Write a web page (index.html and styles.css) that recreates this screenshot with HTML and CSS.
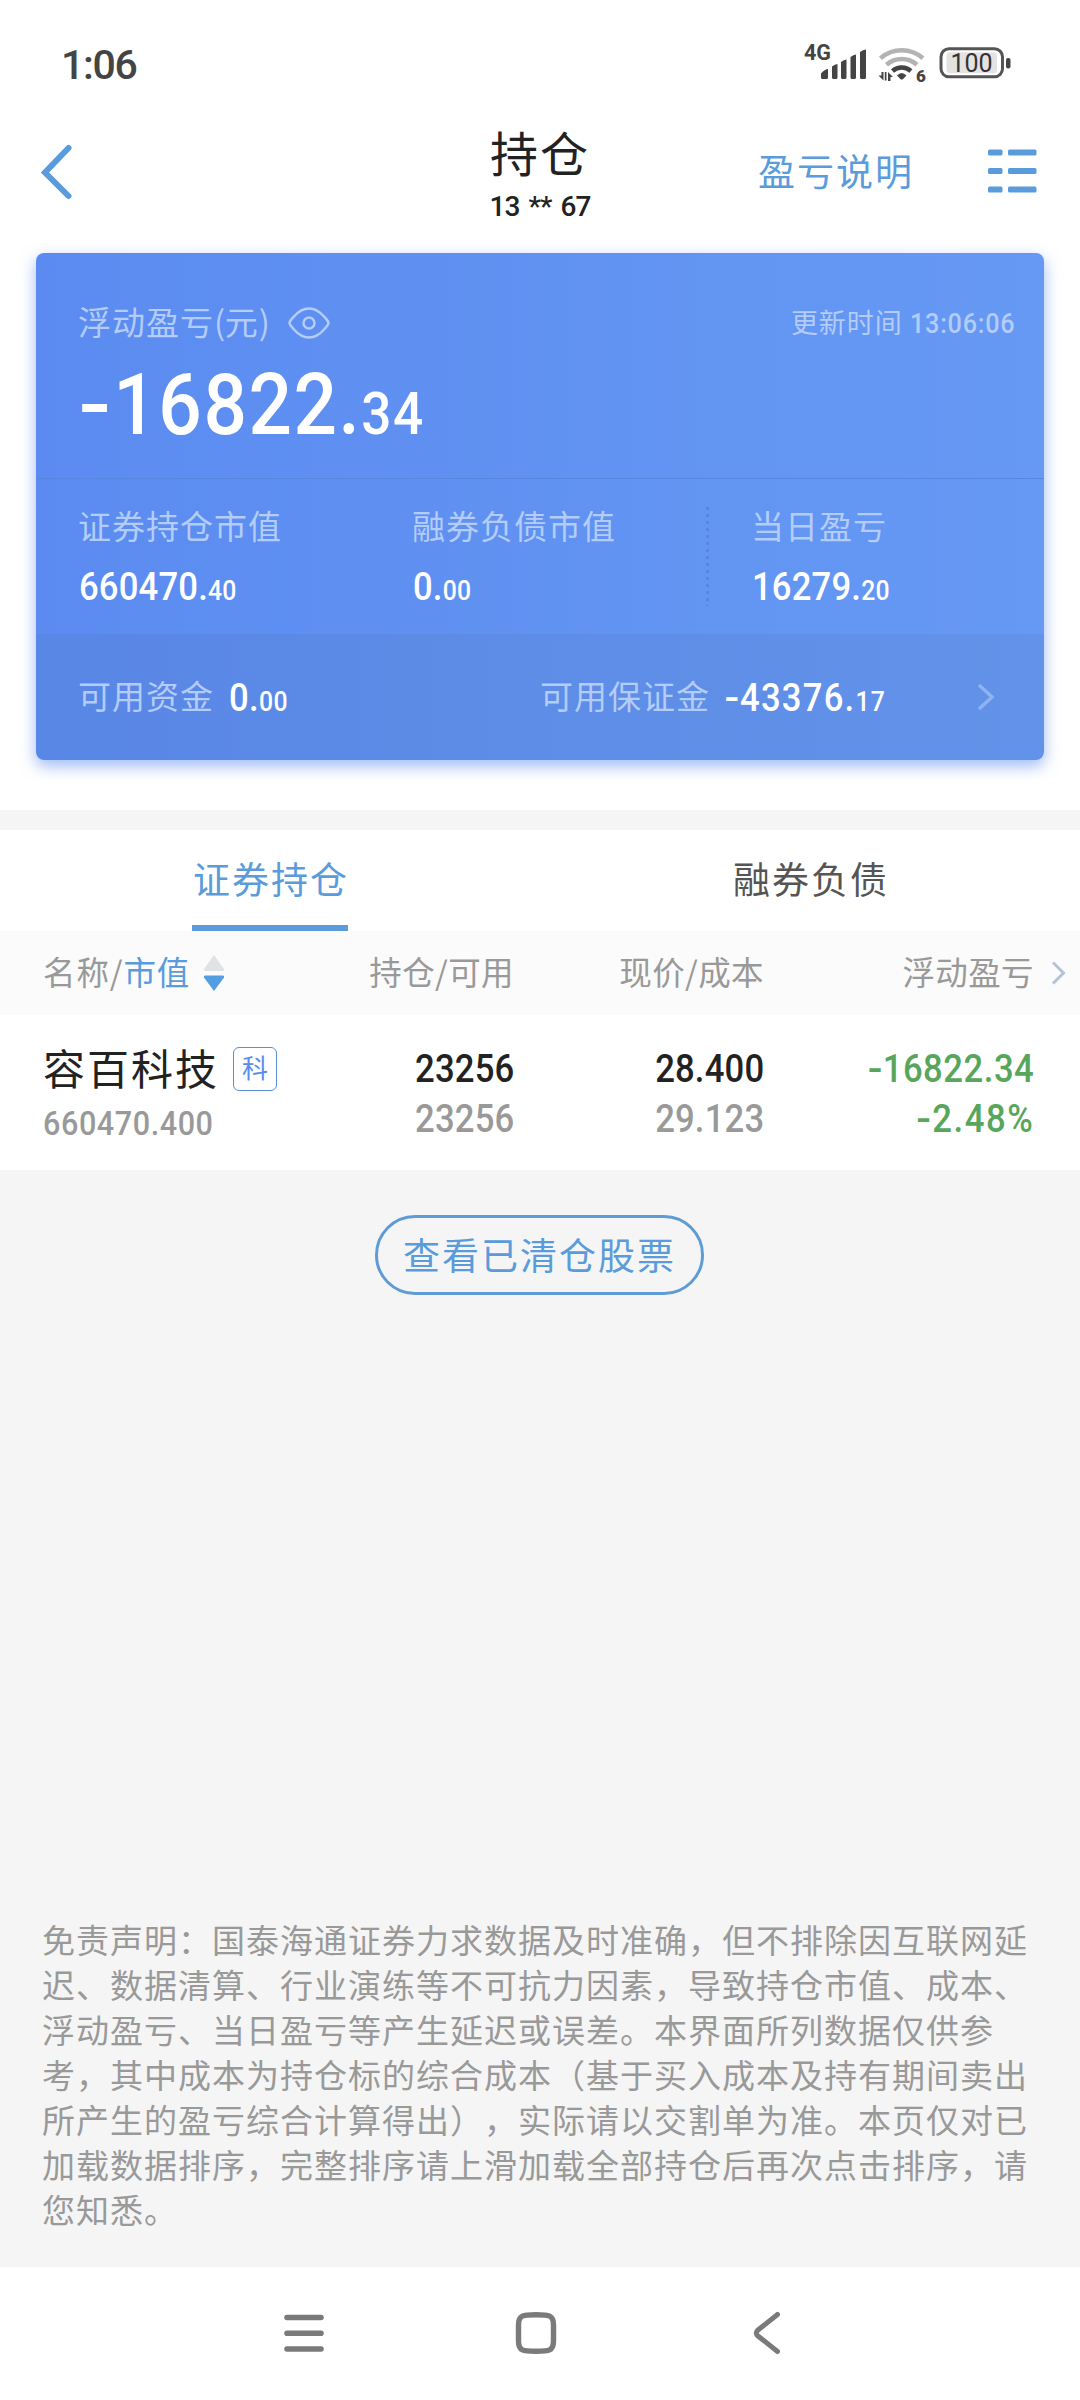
FILE: index.html
```html
<!DOCTYPE html>
<html lang="zh-CN">
<head>
<meta charset="utf-8">
<title>持仓</title>
<link rel="stylesheet" href="styles.css">
</head>
<body>
<div class="screen">
  <div class="status">
    <span class="clock">1:06</span>
    <svg class="status-icons" width="210" height="40" viewBox="0 0 210 40">
      <g fill="#444">
        <text x="0" y="18.500" class="net">4G</text>
        <path d="M17 36.500v-4q4-4.500 7-4.500v8.500q0 1.500-1.500 1.500h-4q-1.500 0-1.500-1.500zM28 36.500v-11q3-2.500 5.500-2.500v13.500q0 1.500-1.500 1.500h-2.500q-1.500 0-1.500-1.500zM37 36.500V21q3-2.500 5.500-2.500v18q0 1.500-1.500 1.500h-2.500q-1.500 0-1.500-1.500zM46.500 36.500V16q3-2.500 5.500-2.500v23q0 1.500-1.500 1.500H48q-1.500 0-1.500-1.500zM56 36.500V11q3-2.500 6-2.500v28q0 1.500-1.500 1.500h-3q-1.500 0-1.500-1.500z"/>
        <path d="M93 34.500q4.700-5 9.400 0l-3.300 3.500q-1.400 1.200-2.800 0z"/>
        <path d="M79.500 31v8.500l-5-5h3V31zM80.800 31h1.700v8.500h-1.700zM84 40v-9l5 5h-2.500v4z"/>
        <text x="112" y="40.500" class="six">6</text>
      </g>
      <g fill="none" stroke-linecap="butt" stroke-width="4.600">
        <path stroke="#b3b3b3" d="M76.500 17.300a32 32 0 0 1 42.400 0M82.500 23.800a23 23 0 0 1 30.400 0"/>
        <path stroke="#444" d="M88.500 30a14 14 0 0 1 18.400 0"/>
      </g>
      <rect x="137" y="7.800" width="61.500" height="28" rx="8" fill="none" stroke="#555" stroke-width="3"/>
      <rect x="142.500" y="11.300" width="50.500" height="21" rx="4" fill="#e3e3e3"/>
      <rect x="202" y="17" width="4.500" height="10.500" rx="2" fill="#444"/>
      <text x="167.500" y="31" class="batt">100</text>
    </svg>
  </div>

  <header class="header">
    <svg class="back" width="36" height="60" viewBox="0 0 36 60"><path d="M30.500 7 7 31.500 30.500 55" fill="none" stroke="#5a9bdb" stroke-width="6" stroke-linecap="round"/></svg>
    <div class="titles">
      <h1>持仓</h1>
      <div class="account">13 ** 67</div>
    </div>
    <div class="actions">
      <span>盈亏说明</span>
      <svg width="49" height="44" viewBox="0 0 49 44" fill="#5a9bdb"><rect y="0.500" width="14.500" height="6" rx="1.500"/><rect x="20" y="0.500" width="28.500" height="6" rx="1.500"/><rect y="19" width="14.500" height="6" rx="1.500"/><rect x="20" y="19" width="28.500" height="6" rx="1.500"/><rect y="37.500" width="14.500" height="6" rx="1.500"/><rect x="20" y="37.500" width="28.500" height="6" rx="1.500"/></svg>
    </div>
  </header>

  <div class="summary">
    <section class="card">
      <div class="total">
        <div class="total-head">
          <span class="label">浮动盈亏<span class="paren">(</span>元<span class="paren">)</span></span>
          <svg width="42" height="32" viewBox="0 0 42 32" fill="none" stroke="#b3ccf9" stroke-width="2.500"><path d="M1.500 16Q2 13.500 6 9.500Q13 1.500 21 1.500T36 9.500Q40 13.500 40.500 16Q40 18.500 36 22.500Q29 30.500 21 30.500T6 22.500Q2 18.500 1.500 16z"/><circle cx="21" cy="16" r="5.500"/></svg>
          <span class="updated">更新时间 <span class="num">13:06:06</span></span>
        </div>
        <div class="num big"><span class="minus">-</span>16822.<small>34</small></div>
      </div>
      <div class="stats">
        <div><span class="label">证券持仓市值</span><span class="num">660470.<small>40</small></span></div>
        <div><span class="label">融券负债市值</span><span class="num">0.<small>00</small></span></div>
        <i class="dots"></i>
        <div><span class="label">当日盈亏</span><span class="num">16279.<small>20</small></span></div>
      </div>
      <div class="funds">
        <div><span class="label">可用资金</span><span class="num">0.<small>00</small></span></div>
        <div><span class="label">可用保证金</span><span class="num"><span class="minus">-</span>43376.<small>17</small></span></div>
        <svg width="18" height="28" viewBox="0 0 18 28"><path d="m2 2 13 12L2 26" fill="none" stroke="#8fb2f4" stroke-width="3.500"/></svg>
      </div>
    </section>
  </div>

  <nav class="tabs">
    <span class="tab active">证券持仓</span>
    <span class="tab">融券负债</span>
  </nav>

  <div class="row thead">
    <span class="first">名称/<b>市值</b><svg width="22" height="38" viewBox="0 0 22 38"><path d="M11 1 21 15q.500 2-1 2H2q-1.500 0-1-2z" fill="#e0e3e6"/><path d="M11 37 21 23.500q.500-2-1-2H2q-1.500 0-1 2z" fill="#549de0"/></svg></span>
    <span>持仓/可用</span>
    <span>现价/成本</span>
    <span>浮动盈亏</span>
    <svg class="more" width="16" height="24" viewBox="0 0 16 24"><path d="M2 1.500 12.500 12 2 22.500" fill="none" stroke="#b4c4d8" stroke-width="3"/></svg>
  </div>

  <div class="row holding">
    <div class="first">
      <div class="name">容百科技<span class="tag">科</span></div>
      <div class="num value">660470.400</div>
    </div>
    <div class="pair"><span class="num">23256</span><span class="num dim">23256</span></div>
    <div class="pair"><span class="num">28.400</span><span class="num dim">29.123</span></div>
    <div class="pair green"><span class="num"><span class="minus">-</span>16822.34</span><span class="num percent"><span class="minus">-</span>2.48%</span></div>
  </div>

  <div class="body">
    <div class="pill">查看已清仓股票</div>
    <p class="disclaimer">免责声明：国泰海通证券力求数据及时准确，但不排除因互联网延<br>迟、数据清算、行业演练等不可抗力因素，导致持仓市值、成本、<br>浮动盈亏、当日盈亏等产生延迟或误差。本界面所列数据仅供参<br>考，其中成本为持仓标的综合成本（基于买入成本及持有期间卖出<br>所产生的盈亏综合计算得出），实际请以交割单为准。本页仅对已<br>加载数据排序，完整排序请上滑加载全部持仓后再次点击排序，请<br>您知悉。</p>
  </div>

  <footer class="sysnav">
    <svg width="40" height="44" viewBox="0 0 40 44" stroke="#7a7a7a" stroke-width="5.600" stroke-linecap="round"><path d="M3 6.500h34M3 22.300h34M3 38h34"/></svg>
    <svg width="42" height="44" viewBox="0 0 42 44"><path d="M21 3.800C34 3.800 38.500 4 38.500 14V30C38.500 40 34 40.200 21 40.200S3.500 40 3.500 30V14C3.500 4 8 3.800 21 3.800z" fill="none" stroke="#7a7a7a" stroke-width="5.400"/></svg>
    <svg width="28" height="44" viewBox="0 0 28 44"><path d="M24.500 3.500 5 19Q1.500 22 5 25L24.500 40.500" fill="none" stroke="#7a7a7a" stroke-width="5" stroke-linecap="round"/></svg>
  </footer>
</div>
</body>
</html>
```
FILE: styles.css
```css
* { box-sizing: border-box; }

body {
  margin: 0;
  background: #f5f5f5;
  font-family: "Noto Sans CJK SC", sans-serif;
  color: #222;
}

svg { display: block; flex: none; }

.screen {
  width: 1080px;
  height: 2400px;
  display: flex;
  flex-direction: column;
  overflow: hidden;
}

/* numerals are drawn slightly condensed */
.num {
  display: inline-block;
  font-family: Roboto, sans-serif;
  font-weight: 500;
  font-size: 38.500px;
  line-height: 50px;
  letter-spacing: .005em;
  white-space: nowrap;
  transform: scaleX(.9);
  transform-origin: left center;
}
.num small { font-size: 27.500px; }
.minus { display: inline-block; transform: scaleX(1.250); margin-right: .03em; }

/* status bar */
.status {
  height: 100px;
  padding: 0 66px 0 61px;
  background: #fff;
  display: flex;
  justify-content: space-between;
  flex: none;
}
.clock {
  margin-top: 40px;
  font: 500 41px/50px Roboto, sans-serif;
  letter-spacing: -1.300px;
  color: #444;
}
.status-icons { overflow: visible; margin-top: 41px; }
.net { font: 700 21.500px Roboto, sans-serif; }
.six { font: 900 17px Roboto, sans-serif; }
.batt { font: 400 25px Roboto, sans-serif; fill: #333; text-anchor: middle; }

/* header */
.header {
  height: 153px;
  padding: 0 43px 0 38px;
  background: #fff;
  display: grid;
  grid-template-columns: 1fr auto 1fr;
  flex: none;
}
.back { margin-top: 41px; }
.titles { text-align: center; padding-left: 5px; }
h1 {
  margin: 16px 0 0;
  font-size: 48px;
  line-height: 70px;
  font-weight: 400;
  letter-spacing: 2px;
}
.account {
  margin-top: 6px;
  font: 500 28px/30px Roboto, sans-serif;
  letter-spacing: -.900px;
  word-spacing: 3px;
}
.actions {
  height: 44px;
  margin-top: 49px;
  display: flex;
  justify-content: flex-end;
  align-items: center;
  gap: 74px;
  color: #5a9bdb;
  font-size: 37px;
  line-height: 44px;
  letter-spacing: 2px;
}
.actions span { padding-bottom: 3px; }

/* summary card */
.summary {
  height: 557px;
  padding: 0 36px;
  background: #fff;
  flex: none;
}
.card {
  height: 507px;
  color: #fff;
  border-radius: 8px;
  background: linear-gradient(90deg, #5b8bf0, #6699f4);
  box-shadow: 0 6px 16px rgba(91, 139, 240, .6);
}
.label {
  font-size: 33px;
  line-height: 44px;
  letter-spacing: 1px;
  margin-left: -1px;
  color: #b3ccf9;
  white-space: nowrap;
}
.paren { letter-spacing: -.500px; }
.total {
  height: 226px;
  padding: 44px 28px 0 43px;
  border-bottom: 1px solid #5786e0;
}
.total-head { display: flex; align-items: center; height: 48px; }
.total-head svg { margin: 3px 0 0 19px; }
.updated {
  margin-left: auto;
  font-size: 27px;
  letter-spacing: 1px;
  color: #b3ccf9;
  white-space: nowrap;
}
.updated .num {
  font-size: 28px;
  line-height: 30px;
  letter-spacing: .850px;
  margin-right: -11px;
}
.num.big {
  margin: 10px 0 0 3px;
  font-size: 85px;
  line-height: 100px;
  letter-spacing: .02em;
}
.num.big .minus { margin-right: .05em; }
.num.big small { font-size: 59px; }
.stats {
  height: 155px;
  padding: 24px 0 0 43px;
  display: grid;
  grid-template-columns: 334px 293px 46px 1fr;
}
.stats div { display: flex; flex-direction: column; }
.stats .num { margin-top: 15px; }
.dots {
  width: 3px;
  height: 99px;
  margin-top: 4px;
  background: repeating-linear-gradient(#5786e0 0 3px, transparent 3px 7px);
}
.funds {
  height: 126px;
  padding: 0 49px 0 43px;
  border-radius: 0 0 8px 8px;
  background: rgba(80, 110, 160, .13);
  display: grid;
  grid-template-columns: 462px 1fr auto;
  align-items: center;
}
.funds div { display: flex; align-items: center; gap: 15px; }
.funds .label { padding-bottom: 4px; }
.funds .num { margin-left: 1px; padding-top: 6px; letter-spacing: .035em; }
.funds div:first-child .num { margin-left: 0; letter-spacing: .01em; }

/* tabs */
.tabs {
  height: 101px;
  margin-top: 20px;
  background: #fff;
  display: grid;
  grid-template-columns: 1fr 1fr;
  justify-items: center;
  flex: none;
}
.tab {
  width: 156px;
  height: 101px;
  font-size: 37px;
  line-height: 97px;
  letter-spacing: 2px;
  text-indent: 1px;
  white-space: nowrap;
  color: #555;
}
.tab.active { color: #5a9bdb; border-bottom: 6px solid #5a9bdb; }

/* holdings table */
.row {
  display: grid;
  grid-template-columns: 314px 200px 250px 270px 46px;
  justify-items: end;
  flex: none;
}
.first { justify-self: start; padding-left: 43px; white-space: nowrap; }
.thead {
  height: 84px;
  background: #fbfbfb;
  align-items: start;
  font-size: 32.500px;
  line-height: 80px;
  letter-spacing: .400px;
  color: #999;
}
.thead .first { display: flex; align-items: center; letter-spacing: .900px; }
.thead .first svg { margin: 4px 0 0 13px; }
.thead b { font-weight: 400; color: #5a9bdb; }
.thead .more { justify-self: start; margin: 30px 0 0 17px; }
.holding { height: 155px; background: #fff; }
.name {
  margin-top: 20px;
  height: 64px;
  display: flex;
  align-items: center;
  font-size: 42px;
  line-height: 60px;
  letter-spacing: 2px;
}
.tag {
  width: 44px;
  height: 44px;
  margin: 4px 0 0 14px;
  border: 1.500px solid #5b8fd8;
  border-radius: 6px;
  font-size: 26px;
  line-height: 38px;
  letter-spacing: 0;
  text-align: center;
  color: #5b8bf0;
}
.num.value {
  margin-top: 2px;
  font-size: 34px;
  line-height: 44px;
  letter-spacing: .018em;
  color: #999;
}
.pair {
  padding-top: 29px;
  display: flex;
  flex-direction: column;
  align-items: flex-end;
}
.pair .num { transform-origin: right center; }
.pair .dim { color: #999; }
.green { color: #58a65c; }
.pair.green .num { letter-spacing: .015em; }
.pair.green .percent { letter-spacing: .045em; }

/* lower area */
.body {
  flex: 1;
  display: flex;
  flex-direction: column;
  align-items: flex-start;
}
.pill {
  width: 329px;
  height: 80px;
  margin: 45px auto 0 375px;
  border: 3px solid #5f9cd6;
  border-radius: 40px;
  text-align: center;
  font-size: 37px;
  line-height: 72px;
  letter-spacing: 2px;
  color: #5a9bdb;
}
.disclaimer {
  margin: auto 0 35px 42px;
  font-size: 33px;
  line-height: 45px;
  letter-spacing: 1px;
  text-spacing-trim: space-all;
  white-space: nowrap;
  color: #999;
}

/* system navigation */
.sysnav {
  height: 133px;
  padding: 44px 0 0 284px;
  background: #fff;
  display: flex;
  gap: 191px;
  flex: none;
}
.sysnav svg:last-child { margin-left: 5px; }
```
